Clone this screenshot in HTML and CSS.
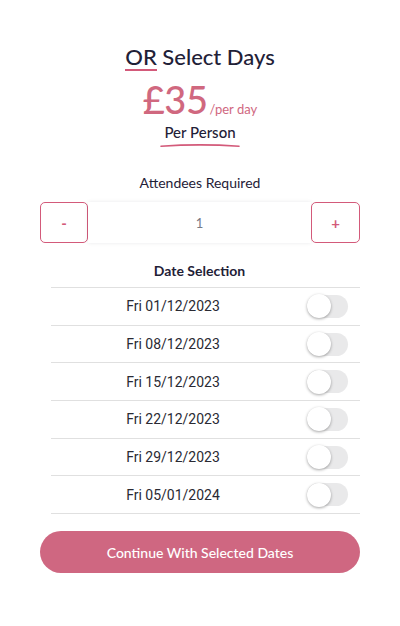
FILE: index.html
```html
<!DOCTYPE html>
<html>
<head>
<meta charset="utf-8">
<link rel="stylesheet" href="styles.css">
</head>
<body>
<div class="page">
  <h1 class="title"><span class="or">OR</span> Select Days</h1>
  <div class="price"><span class="amount">£35</span><span class="per">/per day</span></div>
  <div class="person">
    <span class="person-text">Per Person</span>
    <svg class="swoosh" width="80" height="6" viewBox="0 0 80 6"><path d="M1 4.2 Q40 1.5 79 4.2" stroke="#d35a7a" stroke-width="1.6" fill="none" stroke-linecap="round"/></svg>
  </div>
  <div class="label">Attendees Required</div>
  <div class="stepper">
    <button class="step-btn minus">-</button>
    <div class="qty">1</div>
    <button class="step-btn plus">+</button>
  </div>
  <div class="dates">
    <div class="dates-head">Date Selection</div>
    <div class="row"><span class="date">Fri 01/12/2023</span><span class="cell"><span class="toggle"><span class="knob"></span></span></span></div>
    <div class="row"><span class="date">Fri 08/12/2023</span><span class="cell"><span class="toggle"><span class="knob"></span></span></span></div>
    <div class="row"><span class="date">Fri 15/12/2023</span><span class="cell"><span class="toggle"><span class="knob"></span></span></span></div>
    <div class="row"><span class="date">Fri 22/12/2023</span><span class="cell"><span class="toggle"><span class="knob"></span></span></span></div>
    <div class="row"><span class="date">Fri 29/12/2023</span><span class="cell"><span class="toggle"><span class="knob"></span></span></span></div>
    <div class="row"><span class="date">Fri 05/01/2024</span><span class="cell"><span class="toggle"><span class="knob"></span></span></span></div>
  </div>
  <button class="continue">Continue With Selected Dates</button>
</div>
</body>
</html>
```

FILE: styles.css
```css
html, body {
  margin: 0;
  padding: 0;
  background: #ffffff;
}
body {
  font-family: Lato, "Noto Sans", sans-serif;
  color: #1f2137;
}
.page {
  width: 320px;
  margin: 0 auto;
  padding-top: 43px;
  display: flex;
  flex-direction: column;
  align-items: center;
}
.title {
  margin: 0;
  font-size: 22px;
  line-height: 28px;
  font-weight: 500;
  color: #1f2137;
}
.or {
  display: inline-block;
  border-bottom: 2px solid #d35a7a;
  line-height: 24px;
}
.price {
  margin-top: 6px;
  display: flex;
  align-items: baseline;
  color: #d0687f;
  height: 44px;
}
.amount {
  font-size: 38px;
  line-height: 44px;
  font-weight: 500;
  letter-spacing: -0.5px;
}
.per {
  font-size: 13px;
  margin-left: 2px;
}
.person {
  margin-top: 1px;
  display: flex;
  flex-direction: column;
  align-items: center;
}
.person-text {
  font-size: 15px;
  line-height: 20px;
  font-weight: 500;
  color: #1f2137;
}
.swoosh {
  display: block;
}
.label {
  margin-top: 26px;
  font-size: 14px;
  line-height: 18px;
  color: #1f2137;
}
.stepper {
  margin-top: 10px;
  width: 320px;
  height: 41px;
  display: flex;
}
.step-btn {
  width: 48px;
  height: 41px;
  box-sizing: border-box;
  border: 1.5px solid #d35a7a;
  border-radius: 5px;
  background: #fff;
  color: #d35a7a;
  font-family: Lato, sans-serif;
  font-size: 15px;
  font-weight: 700;
  padding: 0;
}
.plus {
  width: 49px;
}
.qty {
  flex: 1;
  height: 41px;
  display: flex;
  align-items: center;
  justify-content: center;
  font-size: 13px;
  color: #777a85;
  box-shadow: 0 0 4px rgba(0, 0, 30, 0.09);
}
.dates {
  margin-top: 19px;
  align-self: flex-end;
  width: 309px;
  display: flex;
  flex-direction: column;
}
.dates-head {
  text-align: center;
  font-size: 14px;
  font-weight: 700;
  line-height: 18px;
  padding-bottom: 7px;
  padding-right: 12px;
  border-bottom: 1px solid #e0e0e0;
}
.row {
  display: flex;
  align-items: center;
  height: 36.7px;
  border-bottom: 1px solid #e0e0e0;
}
.date {
  width: 244px;
  text-align: center;
  font-family: Roboto, sans-serif;
  font-size: 14px;
  color: #2a2a33;
}
.cell {
  flex: 1;
  display: flex;
  justify-content: center;
}
.toggle {
  width: 41px;
  height: 23px;
  border-radius: 12px;
  background: #e9e9ea;
  position: relative;
  display: block;
}
.knob {
  position: absolute;
  left: 0;
  top: -0.5px;
  width: 24px;
  height: 24px;
  border-radius: 50%;
  background: #fff;
  box-shadow: 0 1px 3px rgba(0, 0, 0, 0.35);
}
.continue {
  margin-top: 17px;
  width: 320px;
  height: 42px;
  border: none;
  border-radius: 21px;
  background: #cf6781;
  color: #fff;
  font-family: Lato, sans-serif;
  font-size: 14px;
  font-weight: 500;
}
```
